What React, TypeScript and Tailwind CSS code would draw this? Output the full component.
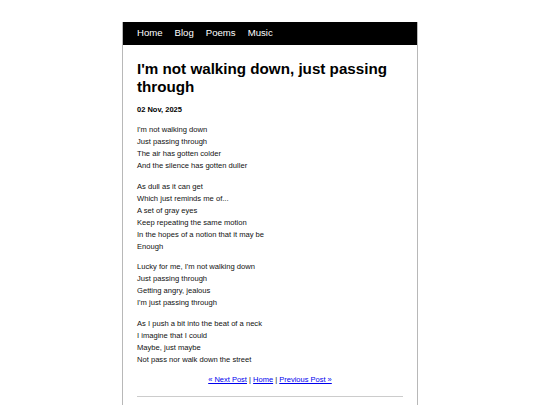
import React from "react";

const stanzas: string[][] = [
  [
    "I'm not walking down",
    "Just passing through",
    "The air has gotten colder",
    "And the silence has gotten duller",
  ],
  [
    "As dull as it can get",
    "Which just reminds me of...",
    "A set of gray eyes",
    "Keep repeating the same motion",
    "In the hopes of a notion that it may be",
    "Enough",
  ],
  [
    "Lucky for me, I'm not walking down",
    "Just passing through",
    "Getting angry, jealous",
    "I'm just passing through",
  ],
  [
    "As I push a bit into the beat of a neck",
    "I imagine that I could",
    "Maybe, just maybe",
    "Not pass nor walk down the street",
  ],
];

export default function App() {
  return (
    <div
      className="min-h-[405px] bg-white antialiased"
      style={{ fontFamily: '"Liberation Sans", Arial, sans-serif' }}
    >
      <div className="mx-auto mt-[22px] w-[296px] border-x border-b border-[#b8b8b8] bg-white">
        <nav className="flex h-[23px] items-center gap-[12px] bg-black px-[14px] text-[9.6px] text-white">
          <a href="#">Home</a>
          <a href="#">Blog</a>
          <a href="#">Poems</a>
          <a href="#">Music</a>
        </nav>
        <div className="px-[14px] pt-[15px] pb-[40px] text-[#111]">
          <h1 className="text-[15.2px] font-bold leading-[17.5px] text-black">
            I'm not walking down, just passing through
          </h1>
          <p className="mt-[8.5px] text-[7.5px] font-bold leading-[12px] text-black">
            02 Nov, 2025
          </p>
          {stanzas.map((s, i) => (
            <p key={i} className="mt-[8.5px] text-[7.6px] leading-[12px]">
              {s.map((l, j) => (
                <React.Fragment key={j}>
                  {l}
                  {j < s.length - 1 && <br />}
                </React.Fragment>
              ))}
            </p>
          ))}
          <p className="mt-[8.5px] text-center text-[7.5px] leading-[12px]">
            <a href="#" className="text-[#0000ee] underline">
              « Next Post
            </a>{" "}
            |{" "}
            <a href="#" className="text-[#0000ee] underline">
              Home
            </a>{" "}
            |{" "}
            <a href="#" className="text-[#0000ee] underline">
              Previous Post »
            </a>
          </p>
          <hr className="mt-[10px] border-t border-[#cccccc]" />
        </div>
      </div>
    </div>
  );
}
